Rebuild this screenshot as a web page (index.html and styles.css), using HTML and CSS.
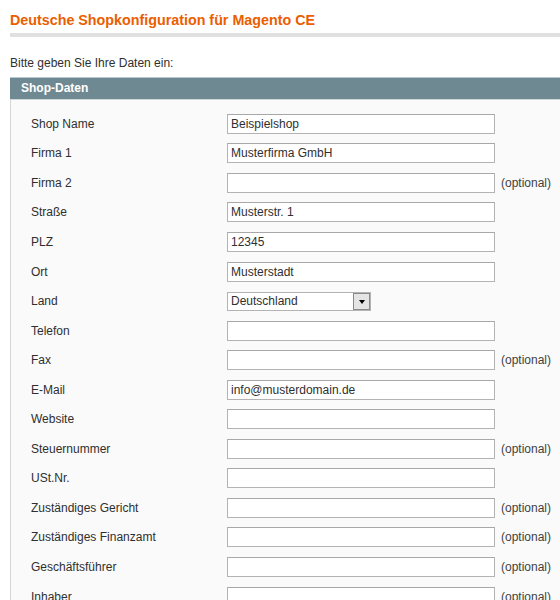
FILE: index.html
```html
<!DOCTYPE html>
<html lang="de">
<head>
<meta charset="utf-8">
<title>Deutsche Shopkonfiguration</title>
<link rel="stylesheet" href="styles.css">
</head>
<body>
<div class="page">
  <h1 class="title">Deutsche Shopkonfiguration für Magento CE</h1>
  <p class="intro">Bitte geben Sie Ihre Daten ein:</p>
  <div class="section">
    <div class="section-head">Shop-Daten</div>
    <div class="fieldset">
      <div class="row"><label class="lbl">Shop Name</label><input class="txt" type="text" value="Beispielshop"></div>
      <div class="row"><label class="lbl">Firma 1</label><input class="txt" type="text" value="Musterfirma GmbH"></div>
      <div class="row"><label class="lbl">Firma 2</label><input class="txt" type="text" value=""><span class="opt">(optional)</span></div>
      <div class="row"><label class="lbl">Straße</label><input class="txt" type="text" value="Musterstr. 1"></div>
      <div class="row"><label class="lbl">PLZ</label><input class="txt" type="text" value="12345"></div>
      <div class="row"><label class="lbl">Ort</label><input class="txt" type="text" value="Musterstadt"></div>
      <div class="row"><label class="lbl">Land</label>
        <span class="sel-wrap">
          <select class="sel"><option>Deutschland</option></select>
          <span class="sel-btn"><span class="tri"></span></span>
        </span>
      </div>
      <div class="row"><label class="lbl">Telefon</label><input class="txt" type="text" value=""></div>
      <div class="row"><label class="lbl">Fax</label><input class="txt" type="text" value=""><span class="opt">(optional)</span></div>
      <div class="row"><label class="lbl">E-Mail</label><input class="txt" type="text" value="info@musterdomain.de"></div>
      <div class="row"><label class="lbl">Website</label><input class="txt" type="text" value=""></div>
      <div class="row"><label class="lbl">Steuernummer</label><input class="txt" type="text" value=""><span class="opt">(optional)</span></div>
      <div class="row"><label class="lbl">USt.Nr.</label><input class="txt" type="text" value=""></div>
      <div class="row"><label class="lbl">Zuständiges Gericht</label><input class="txt" type="text" value=""><span class="opt">(optional)</span></div>
      <div class="row"><label class="lbl">Zuständiges Finanzamt</label><input class="txt" type="text" value=""><span class="opt">(optional)</span></div>
      <div class="row"><label class="lbl">Geschäftsführer</label><input class="txt" type="text" value=""><span class="opt">(optional)</span></div>
      <div class="row"><label class="lbl">Inhaber</label><input class="txt" type="text" value=""><span class="opt">(optional)</span></div>
    </div>
  </div>
</div>
</body>
</html>
```

FILE: styles.css
```css
html, body {
  margin: 0;
  padding: 0;
  overflow: hidden;
  background: #ffffff;
}
body {
  font-family: "Liberation Sans", Arial, sans-serif;
  font-size: 12px;
  color: #2f2f2f;
}
.page {
  width: 620px;
  padding: 10px 0 0 10px;
}
.title {
  margin: 0;
  font-size: 14.3px;
  line-height: 20px;
  font-weight: bold;
  color: #eb5e00;
  padding-bottom: 3px;
  border-bottom: 4px solid #e0e0e0;
}
.intro {
  margin: 19px 0 0 0;
  line-height: 15px;
}
.section {
  margin-top: 6px;
}
.section-head {
  background: #6f8992;
  border-top: 1px solid #b9c8cd;
  border-bottom: 1px solid #cdd6d9;
  color: #ffffff;
  font-weight: bold;
  line-height: 21px;
  padding-left: 11px;
}
.fieldset {
  background: #fafafa;
  border-left: 1px solid #d6d6d6;
  padding: 9px 0 0 20px;
}
.row {
  display: flex;
  align-items: center;
  height: 29.55px;
}
.lbl {
  width: 196px;
  flex: none;
}
.txt {
  box-sizing: border-box;
  width: 268px;
  height: 20px;
  margin: 0;
  padding: 0 3px;
  border: 1px solid #b3b3b3;
  border-top-color: #a8a8a8;
  background: #ffffff;
  font-family: inherit;
  font-size: 12px;
  color: #2f2f2f;
  outline: none;
}
.opt {
  margin-left: 6px;
  color: #3f3f3f;
}
.sel-wrap {
  position: relative;
  display: inline-block;
  width: 144px;
  height: 19px;
}
.sel {
  box-sizing: border-box;
  width: 144px;
  height: 19px;
  margin: 0;
  padding: 0 0 0 3px;
  -webkit-appearance: none;
  appearance: none;
  border: 1px solid #b3b3b3;
  border-radius: 0;
  background: #ffffff;
  font-family: inherit;
  font-size: 12px;
  color: #2f2f2f;
  outline: none;
}
.sel-btn {
  position: absolute;
  top: 1px;
  right: 1px;
  box-sizing: border-box;
  width: 17px;
  height: 17px;
  border: 1px solid #8a8a8a;
  background: #e4e4e4;
  display: flex;
  align-items: center;
  justify-content: center;
}
.tri {
  width: 0;
  height: 0;
  border-left: 3px solid transparent;
  border-right: 3px solid transparent;
  border-top: 4px solid #000000;
  margin-top: 1px;
}
```
